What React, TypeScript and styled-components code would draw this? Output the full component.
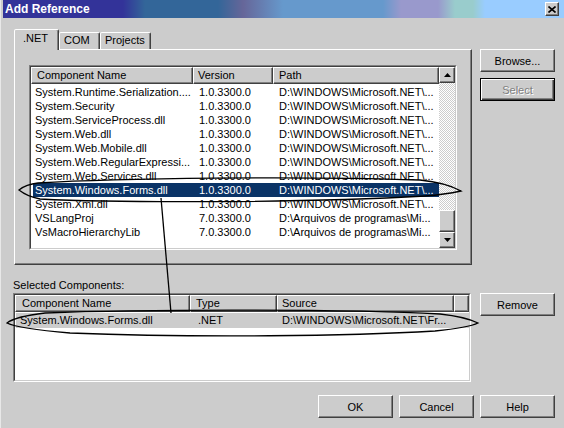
import React from 'react';
import styled, { createGlobalStyle, css } from 'styled-components';

const GlobalStyle = createGlobalStyle`
  html, body {
    margin: 0;
    padding: 0;
    background: #cccccc;
  }
  body {
    font-family: "Liberation Sans", Arial, sans-serif;
    font-size: 11px;
    color: #000000;
  }
  * {
    box-sizing: border-box;
  }
`;

const raised = css`
  border-style: solid;
  border-width: 1px;
  border-color: #ffffff #404040 #404040 #ffffff;
  box-shadow: inset -1px -1px 0 #808080;
  background: #cccccc;
`;

const Window = styled.div`
  position: relative;
  width: 564px;
  height: 428px;
  overflow: hidden;
  padding-left: 3px;
  background: #cccccc;
  box-shadow: inset 1px 0 0 #e8e8e8;
`;

const TitleBar = styled.div`
  display: flex;
  align-items: center;
  justify-content: space-between;
  height: 18px;
  padding: 0 5px 0 2px;
  background: linear-gradient(
    90deg,
    #333399 0px,
    #333399 120px,
    #336699 142px,
    #336699 215px,
    #666699 240px,
    #6699cc 280px,
    #6699cc 380px,
    #9999cc 398px,
    #9999cc 435px,
    #99cccc 452px,
    #99cccc 470px,
    #99ccff 482px
  );
`;

const Title = styled.span`
  color: #ffffff;
  font-weight: bold;
  font-size: 12px;
  line-height: 18px;
`;

const CloseButton = styled.div`
  ${raised};
  width: 14px;
  height: 14px;
  display: flex;
  align-items: center;
  justify-content: center;
`;

const Body = styled.div`
  padding: 11px 9px 0 10px;
`;

const TopRow = styled.div`
  display: flex;
`;

const TabArea = styled.div`
  margin-left: 1px;
  width: 458px;
  display: flex;
  flex-direction: column;
`;

const TabStrip = styled.div`
  display: flex;
  align-items: flex-end;
  height: 20px;
`;

const Tab = styled.div<{ $active?: boolean; $width: number }>`
  position: relative;
  width: ${(p) => p.$width}px;
  border-style: solid;
  border-width: 1px 1px 0 1px;
  border-color: #ffffff #404040 transparent #ffffff;
  border-radius: 2px 2px 0 0;
  box-shadow: inset -1px 0 0 #808080;
  background: #cccccc;
  line-height: 13px;
  white-space: nowrap;
  ${(p) =>
    p.$active
      ? css`
          z-index: 1;
          height: 21px;
          margin-bottom: -1px;
          padding: 2px 0 0 8px;
        `
      : css`
          height: 17px;
          padding: 1px 0 0 4px;
        `}
`;

const TabPanel = styled.div`
  width: 458px;
  height: 216px;
  border-style: solid;
  border-width: 1px;
  border-color: #ffffff #404040 #404040 #ffffff;
  box-shadow: inset -1px -1px 0 #808080;
  padding: 15px 0 0 14px;
`;

const ListOuter = styled.div<{ $width: number; $height: number }>`
  width: ${(p) => p.$width}px;
  height: ${(p) => p.$height}px;
  border-style: solid;
  border-width: 1px;
  border-color: #808080 #ffffff #ffffff #808080;
`;

const ListInner = styled.div`
  display: flex;
  height: 100%;
  border-style: solid;
  border-width: 1px;
  border-color: #404040 #cccccc #cccccc #404040;
  background: #ffffff;
  overflow: hidden;
`;

const ListMain = styled.div`
  flex: 1;
  display: flex;
  flex-direction: column;
  min-width: 0;
`;

const HeaderRow = styled.div<{ $cols: string }>`
  display: grid;
  grid-template-columns: ${(p) => p.$cols};
  height: 17px;
  flex: none;
`;

const HeaderCell = styled.div<{ $pad: number }>`
  ${raised};
  padding-left: ${(p) => p.$pad}px;
  line-height: 15px;
  white-space: nowrap;
  overflow: hidden;
`;

const Rows = styled.div`
  padding-top: 1px;
`;

const Row = styled.div<{ $cols: string; $selected?: boolean; $inactive?: boolean }>`
  display: grid;
  grid-template-columns: ${(p) => p.$cols};
  margin-left: ${(p) => (p.$inactive ? 1 : 2)}px;
  height: ${(p) => (p.$inactive ? 15 : 14)}px;
  line-height: ${(p) => (p.$inactive ? 15 : 14)}px;
  white-space: nowrap;
  background: ${(p) => (p.$selected ? '#0a3366' : p.$inactive ? '#cccccc' : 'transparent')};
  color: ${(p) => (p.$selected ? '#ffffff' : '#000000')};
`;

const Cell = styled.div<{ $pad: number }>`
  padding-left: ${(p) => p.$pad}px;
  overflow: hidden;
`;

const ScrollBar = styled.div`
  width: 16px;
  flex: none;
  display: flex;
  flex-direction: column;
`;

const ScrollArrow = styled.div<{ $height: number }>`
  ${raised};
  height: ${(p) => p.$height}px;
  flex: none;
  display: flex;
  align-items: center;
  justify-content: center;
`;

const ScrollTrack = styled.div`
  flex: 1;
  background: repeating-conic-gradient(#ffffff 0 25%, #cccccc 0 50%) 0 0 / 2px 2px;
`;

const SideButtons = styled.div`
  margin-left: 8px;
  padding-top: 20px;
  display: flex;
  flex-direction: column;
  gap: 6px;
`;

const Button = styled.button<{ $default?: boolean }>`
  ${raised};
  width: 75px;
  height: 23px;
  padding: 0;
  font-family: inherit;
  font-size: 11px;
  color: #000000;
  ${(p) =>
    p.$default &&
    css`
      border: 1px solid #000000;
      box-shadow: inset 1px 1px 0 #ffffff, inset -1px -1px 0 #404040, inset -2px -2px 0 #808080;
    `}
  &:disabled {
    color: #808080;
    text-shadow: 1px 1px 0 #ffffff;
  }
`;

const SectionLabel = styled.div`
  margin-top: 14px;
  line-height: 13px;
  height: 13px;
`;

const BottomRow = styled.div`
  display: flex;
  gap: 9px;
  margin-top: 1px;
`;

const Footer = styled.div`
  display: flex;
  justify-content: flex-end;
  gap: 6px;
  margin-top: 13px;
`;

const Annotations = styled.svg`
  position: absolute;
  left: 0;
  top: 0;
  pointer-events: none;
`;

const TOP_HEADER_COLS = '162px 80px 166px';
const TOP_ROW_COLS = '160px 80px 166px';
const BOTTOM_HEADER_COLS = '175px 87px 177px 15px';
const BOTTOM_ROW_COLS = '174px 87px 179px';

const NET_PATH = 'D:\\WINDOWS\\Microsoft.NET\\...';
const VS_PATH = 'D:\\Arquivos de programas\\Mi...';

const components = [
  { name: 'System.Runtime.Serialization....', version: '1.0.3300.0', path: NET_PATH },
  { name: 'System.Security', version: '1.0.3300.0', path: NET_PATH },
  { name: 'System.ServiceProcess.dll', version: '1.0.3300.0', path: NET_PATH },
  { name: 'System.Web.dll', version: '1.0.3300.0', path: NET_PATH },
  { name: 'System.Web.Mobile.dll', version: '1.0.3300.0', path: NET_PATH },
  { name: 'System.Web.RegularExpressi...', version: '1.0.3300.0', path: NET_PATH },
  { name: 'System.Web.Services.dll', version: '1.0.3300.0', path: NET_PATH },
  { name: 'System.Windows.Forms.dll', version: '1.0.3300.0', path: NET_PATH, selected: true },
  { name: 'System.Xml.dll', version: '1.0.3300.0', path: NET_PATH },
  { name: 'VSLangProj', version: '7.0.3300.0', path: VS_PATH },
  { name: 'VsMacroHierarchyLib', version: '7.0.3300.0', path: VS_PATH },
];

function Arrow({ up }: { up?: boolean }) {
  return (
    <svg width="7" height="4" viewBox="0 0 7 4">
      <polygon points={up ? '3.5,0 7,4 0,4' : '0,0 7,0 3.5,4'} fill="#000000" />
    </svg>
  );
}

function App() {
  return (
    <>
      <GlobalStyle />
      <Window>
        <TitleBar>
          <Title>Add Reference</Title>
          <CloseButton>
            <svg width="8" height="7" viewBox="0 0 8 7">
              <path d="M0.5 0.5 L7.5 6.5 M7.5 0.5 L0.5 6.5" stroke="#000000" strokeWidth="1.6" />
            </svg>
          </CloseButton>
        </TitleBar>
        <Body>
          <TopRow>
            <TabArea>
              <TabStrip>
                <Tab $active $width={45}>.NET</Tab>
                <Tab $width={41}>COM</Tab>
                <Tab $width={51}>Projects</Tab>
              </TabStrip>
              <TabPanel>
                <ListOuter $width={428} $height={185}>
                  <ListInner>
                    <ListMain>
                      <HeaderRow $cols={TOP_HEADER_COLS}>
                        <HeaderCell $pad={5}>Component Name</HeaderCell>
                        <HeaderCell $pad={4}>Version</HeaderCell>
                        <HeaderCell $pad={5}>Path</HeaderCell>
                      </HeaderRow>
                      <Rows>
                        {components.map((c) => (
                          <Row key={c.name} $cols={TOP_ROW_COLS} $selected={c.selected}>
                            <Cell $pad={2}>{c.name}</Cell>
                            <Cell $pad={6}>{c.version}</Cell>
                            <Cell $pad={6}>{c.path}</Cell>
                          </Row>
                        ))}
                      </Rows>
                    </ListMain>
                    <ScrollBar>
                      <ScrollArrow $height={16}>
                        <Arrow up />
                      </ScrollArrow>
                      <ScrollTrack />
                      <ScrollArrow $height={22} />
                      <ScrollArrow $height={16}>
                        <Arrow />
                      </ScrollArrow>
                    </ScrollBar>
                  </ListInner>
                </ListOuter>
              </TabPanel>
            </TabArea>
            <SideButtons>
              <Button>Browse...</Button>
              <Button $default disabled>
                Select
              </Button>
            </SideButtons>
          </TopRow>
          <SectionLabel>Selected Components:</SectionLabel>
          <BottomRow>
            <ListOuter $width={458} $height={89}>
              <ListInner>
                <ListMain>
                  <HeaderRow $cols={BOTTOM_HEADER_COLS}>
                    <HeaderCell $pad={6}>Component Name</HeaderCell>
                    <HeaderCell $pad={5}>Type</HeaderCell>
                    <HeaderCell $pad={4}>Source</HeaderCell>
                    <HeaderCell $pad={0} />
                  </HeaderRow>
                  <Rows>
                    <Row $cols={BOTTOM_ROW_COLS} $inactive>
                      <Cell $pad={4}>System.Windows.Forms.dll</Cell>
                      <Cell $pad={8}>.NET</Cell>
                      <Cell $pad={5}>D:\WINDOWS\Microsoft.NET\Fr...</Cell>
                    </Row>
                  </Rows>
                </ListMain>
              </ListInner>
            </ListOuter>
            <Button>Remove</Button>
          </BottomRow>
          <Footer>
            <Button>OK</Button>
            <Button>Cancel</Button>
            <Button>Help</Button>
          </Footer>
        </Body>
        <Annotations width="564" height="428" viewBox="0 0 564 428">
          <g fill="none" stroke="#000000" strokeWidth="1.3">
            <path d="M19,190 C24,186 29,184 38,183 C120,178 300,176 420,180 C440,182 452,186 461,191 C452,193 440,195 425,196 C300,203 120,203 40,199 C30,197 24,194 19,190 Z" />
            <path d="M161,198 L171,313" />
            <path d="M7,323 C12,319 20,316 45,313 C150,309 350,309 440,314 C458,316 470,319 478,323 C470,327 455,329 435,331 C350,336 200,338 70,333 C35,330 15,327 7,323 Z" />
          </g>
        </Annotations>
      </Window>
    </>
  );
}

export default App;
